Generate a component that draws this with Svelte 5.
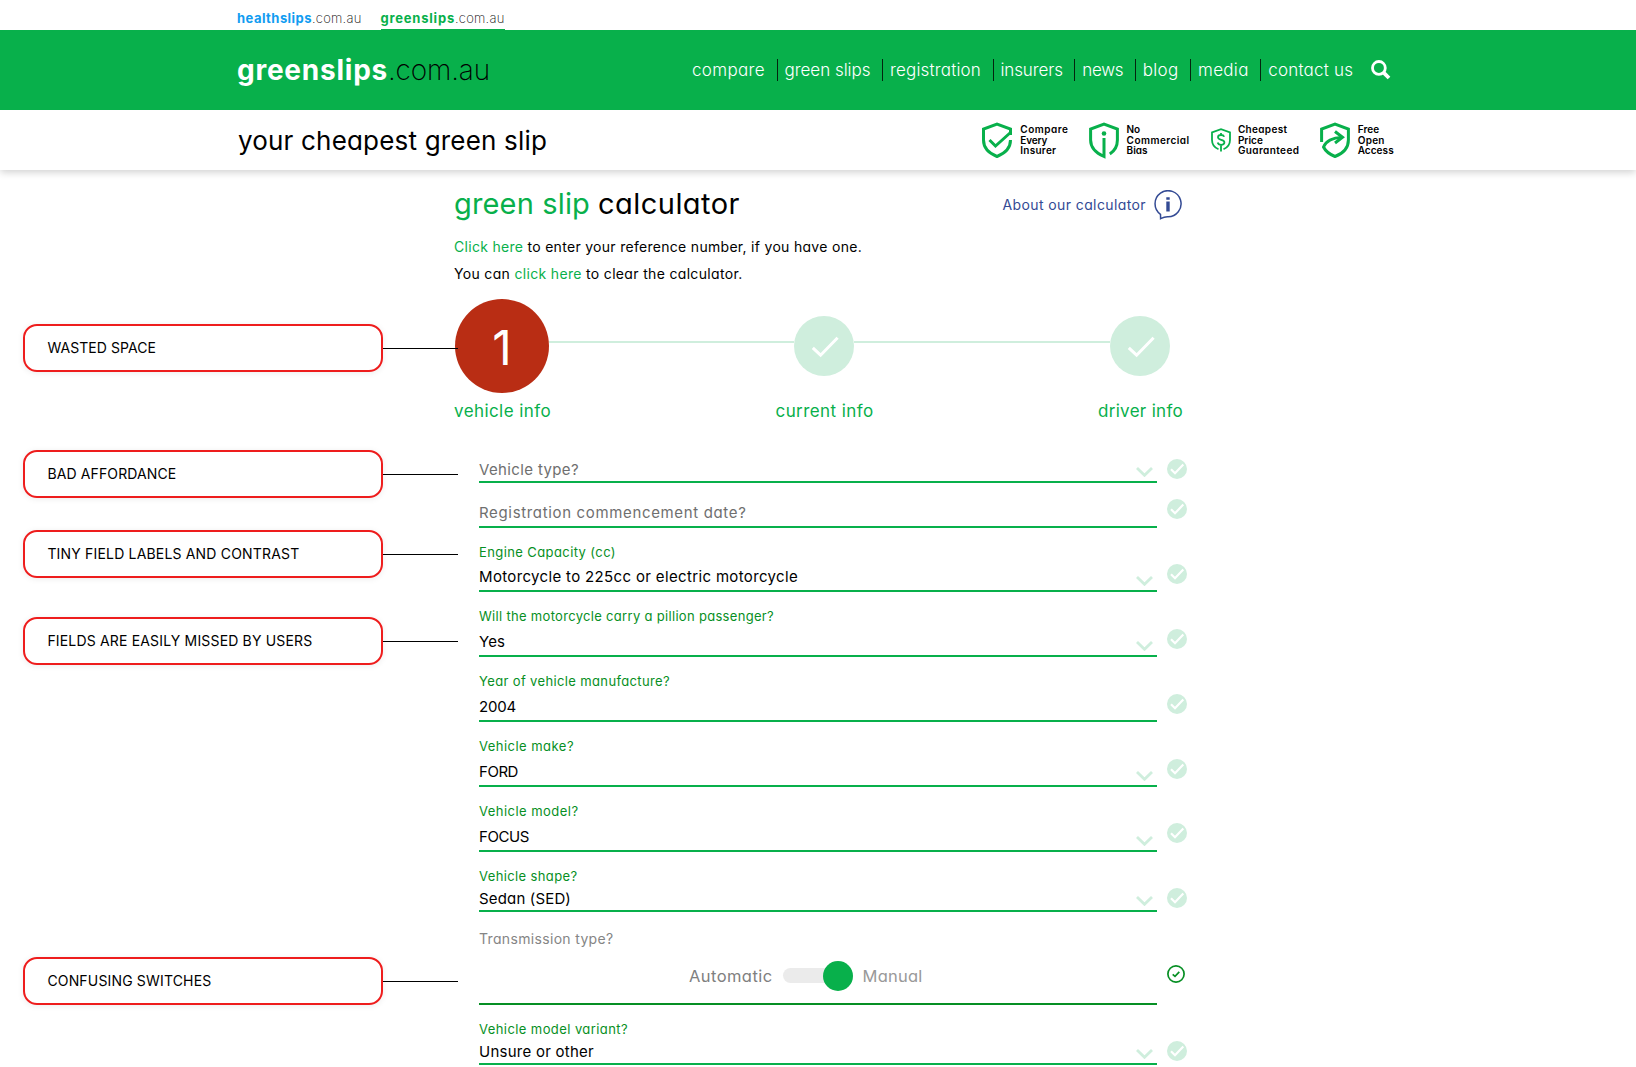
<script lang="ts">
	type Field = {
		label?: string;
		labelWidth?: number;
		value?: string;
		placeholder?: string;
		width: number;
		height: number;
		compact?: boolean;
		select?: boolean;
	};

	const nav = [
		{ text: 'compare', width: 73 },
		{ text: 'green slips', width: 86 },
		{ text: 'registration', width: 91 },
		{ text: 'insurers', width: 62.3 },
		{ text: 'news', width: 41 },
		{ text: 'blog', width: 35.7 },
		{ text: 'media', width: 50.7 },
		{ text: 'contact us', width: 85 }
	];

	const notes = [
		{ text: 'WASTED SPACE', width: 108.5, gap: 0 },
		{ text: 'BAD AFFORDANCE', width: 129, gap: 78 },
		{ text: 'TINY FIELD LABELS AND CONTRAST', width: 252, gap: 32 },
		{ text: 'FIELDS ARE EASILY MISSED BY USERS', width: 265, gap: 39 },
		{ text: 'CONFUSING SWITCHES', width: 164, gap: 292 }
	];

	const fields: Field[] = [
		{ placeholder: 'Vehicle type?', width: 100, height: 45, compact: true, select: true },
		{ placeholder: 'Registration commencement date?', width: 267.5, height: 44.6 },
		{ label: 'Engine Capacity (cc)', labelWidth: 137, value: 'Motorcycle to 225cc or electric motorcycle', width: 319, height: 64.9, select: true },
		{ label: 'Will the motorcycle carry a pillion passenger?', labelWidth: 295, value: 'Yes', width: 26, height: 64.9, select: true },
		{ label: 'Year of vehicle manufacture?', labelWidth: 191, value: '2004', width: 37, height: 64.9 },
		{ label: 'Vehicle make?', labelWidth: 95, value: 'FORD', width: 39, height: 64.9, select: true },
		{ label: 'Vehicle model?', labelWidth: 99.5, value: 'FOCUS', width: 50, height: 64.8, select: true },
		{ label: 'Vehicle shape?', labelWidth: 98.5, value: 'Sedan (SED)', width: 92, height: 60, compact: true, select: true }
	];

	const variant: Field = {
		label: 'Vehicle model variant?',
		labelWidth: 149,
		value: 'Unsure or other',
		width: 115,
		height: 60,
		compact: true,
		select: true
	};

	// Tracks a run of text out to a set width
	function fit(node: HTMLElement, width: number) {
		const count = (node.textContent ?? '').length;
		const natural = node.getBoundingClientRect().width;
		node.style.letterSpacing = `${(width - natural) / count}px`;
	}
</script>

{#snippet tick()}
	<svg class="tick" width="20" height="20" viewBox="0 0 20 20">
		<circle cx="10" cy="10" r="10" fill="#cfeedd" />
		<path d="M4 10.3 8 14.3 16.3 5.6" fill="none" stroke="#fff" stroke-width="2.2" />
	</svg>
{/snippet}

{#snippet bigTick()}
	<svg class="big-tick" width="60" height="60" viewBox="0 0 60 60">
		<circle cx="30" cy="30" r="30" fill="#cfeedd" />
		<path d="M18.8 31.8 26.6 39.2 43.6 21.800" fill="none" stroke="#fff" stroke-width="3" />
	</svg>
{/snippet}

{#snippet fieldRow(field: Field)}
	<div class="row" class:compact={field.compact} style:height="{field.height}px">
		<div class="field">
			{#if field.label}
				<span class="label"><span use:fit={field.labelWidth ?? 0}>{field.label}</span></span>
			{/if}
			<span class="value" class:placeholder={field.placeholder}>
				<span use:fit={field.width}>{field.value ?? field.placeholder}</span>
			</span>
			{#if field.select}
				<svg class="chevron" width="17" height="10" viewBox="0 0 17 10">
					<path d="M1 1 8.500 8.300 16 1" fill="none" stroke="#cfeedd" stroke-width="2.800" />
				</svg>
			{/if}
		</div>
		{@render tick()}
	</div>
{/snippet}

<div class="page">
	<div class="topbar">
		<a class="site" href="#health"><b class="blue" use:fit={75}>healthslips</b><i use:fit={49.5}>.com.au</i></a>
		<a class="site active" href="#green"><b use:fit={74.5}>greenslips</b><i use:fit={49.5}>.com.au</i></a>
	</div>

	<header>
		<div class="logo"><b use:fit={151}>greenslips</b><i use:fit={102}>.com.au</i></div>
		<nav>
			{#each nav as item}
				<a href="#nav"><span use:fit={item.width}>{item.text}</span></a>
			{/each}
		</nav>
		<svg class="search" width="20" height="20" viewBox="0 0 20 20">
			<circle cx="7.9" cy="7.9" r="6.4" fill="none" stroke="#fff" stroke-width="2.8" />
			<path d="M12.4 12.4 18 18" stroke="#fff" stroke-width="3.8" />
		</svg>
	</header>

	<div class="subheader">
		<h2><span use:fit={309}>your cheapest green slip</span></h2>
		<div class="badge">
			<svg width="32" height="37" viewBox="0 0 32 37" fill="none" stroke="#08b04b" stroke-width="3">
				<path d="M29.5 13V7L16 2.2 2.5 7v11c0 8 6 13.5 13.5 16.5C23.5 31.5 29.5 26 29.5 18" />
				<path d="M8.5 18 14.5 24 29.5 10.5" />
			</svg>
			<p><span use:fit={48}>Compare</span><br /><span use:fit={27}>Every</span><br /><span use:fit={36}>Insurer</span></p>
		</div>
		<div class="badge">
			<svg width="30" height="37" viewBox="0 0 30 37" fill="none" stroke="#08b04b" stroke-width="3">
				<path d="M15 16v18.5C7 31 1.6 26 1.6 18V7L15 2.2 28.4 7v11c0 6-3 11-7.6 14" />
				<circle cx="15" cy="11.5" r="2.3" fill="#08b04b" stroke="none" />
			</svg>
			<p><span use:fit={13.5}>No</span><br /><span use:fit={63}>Commercial</span><br /><span use:fit={21}>Bias</span></p>
		</div>
		<div class="badge">
			<svg width="20" height="24" viewBox="0 0 20 24" fill="none" stroke="#08b04b" stroke-width="1.8">
				<path d="M7.5 21.3C3.5 19.5 1 16.5 1 12V4.5L10 1.2 19 4.5V12c0 4.5-2.5 7.5-6.5 9.3" />
				<path d="M13.2 8.8c-.5-1.3-1.7-1.8-3.2-1.8-1.7 0-3 .8-3 2.3 0 3.3 6.4 1.7 6.4 5 0 1.6-1.5 2.5-3.3 2.5-1.7 0-3-.7-3.4-2.2M10 5v2M10 17v6.5" />
			</svg>
			<p><span use:fit={49.5}>Cheapest</span><br /><span use:fit={25}>Price</span><br /><span use:fit={61.5}>Guaranteed</span></p>
		</div>
		<div class="badge">
			<svg width="30" height="37" viewBox="0 0 30 37" fill="none" stroke="#08b04b" stroke-width="3">
				<path d="M1.6 20V7L15 2.2 28.4 7v11c0 8-5.5 13.5-13.4 16.5C9.5 32.3 5.500 29 3.500 25c2.500-5.500 9-9.500 18-9.500" />
				<path d="M15 9.500 22.500 15.300 15 21" />
			</svg>
			<p><span use:fit={21.5}>Free</span><br /><span use:fit={27}>Open</span><br /><span use:fit={36}>Access</span></p>
		</div>
	</div>

	<div class="content">
		<aside>
			{#each notes as note}
				<div class="note" style:margin-top="{note.gap}px">
					<div class="note-box"><span use:fit={note.width}>{note.text}</span></div>
					<div class="note-line"></div>
				</div>
			{/each}
		</aside>

		<main>
			<div class="title">
				<h1><span class="green" use:fit={136}>green slip</span><span use:fit={142}>calculator</span></h1>
				<a class="about" href="#about">
					<span use:fit={143.5}>About our calculator</span>
					<svg width="28" height="30" viewBox="0 0 28 30" fill="none" stroke="#334a94" stroke-width="1.5">
						<path d="M6.5 24.3A13 13 0 1 1 13.5 26.7C11 26.8 9 27.5 6.6 28.7Z" />
						<path d="M14 7.2v2.6M14 11.5v10" stroke-width="3.4" />
					</svg>
				</a>
			</div>

			<p class="intro"><span use:fit={408}><a href="#reference">Click here</a> to enter your reference number, if you have one.</span></p>
			<p class="intro"><span use:fit={288.5}>You can <a href="#clear">click here</a> to clear the calculator.</span></p>

			<div class="steps">
				<div class="step-one">1</div>
				<div class="bar first"></div>
				{@render bigTick()}
				<div class="bar"></div>
				{@render bigTick()}
			</div>
			<div class="step-labels">
				<span use:fit={97}>vehicle info</span>
				<span use:fit={98}>current info</span>
				<span use:fit={85}>driver info</span>
			</div>

			<form>
				{#each fields as field}
					{@render fieldRow(field)}
				{/each}
				<div class="row switch-row">
					<div class="field">
						<span class="label"><span use:fit={134.5}>Transmission type?</span></span>
						<div class="switch">
							<span use:fit={83.5}>Automatic</span>
							<div class="track"><div class="knob"></div></div>
							<span class="off" use:fit={60}>Manual</span>
						</div>
					</div>
					<svg class="tick" width="18" height="18" viewBox="0 0 18 18" fill="none" stroke="#078f24">
						<circle cx="9" cy="9" r="8.1" stroke-width="1.7" />
						<path d="M5.7 9.3 8 11.4 12.3 6.8" stroke-width="1.7" />
					</svg>
				</div>
				{@render fieldRow(variant)}
			</form>
		</main>
	</div>
</div>

<style>
	:global(body) {
		background: #fff;
		overflow: hidden;
	}

	.page {
		height: 1067px;
		overflow: hidden;
		font-family: Inter, 'Open Sans', sans-serif;
		font-feature-settings: 'cv11';
		color: #000;
		white-space: nowrap;
	}

	h1,
	h2,
	p {
		margin: 0;
		font-weight: 400;
	}

	a {
		color: inherit;
		text-decoration: none;
	}

	i {
		font-style: normal;
		font-weight: 200;
	}

	svg {
		flex-shrink: 0;
	}

	.green,
	.intro a {
		color: #08b04b;
	}

	.topbar {
		display: flex;
		gap: 19px;
		height: 30px;
		padding-left: 237px;
		box-sizing: border-box;
		font-size: 13px;
		line-height: 36px;
	}

	.site {
		height: 29px;
		border-bottom: 1px solid transparent;
		font-feature-settings: normal;
	}

	.site.active {
		border-color: #08b04b;
	}

	.site b {
		color: #08b04b;
	}

	.site b.blue {
		color: #109cf1;
	}

	header {
		display: flex;
		align-items: center;
		height: 80px;
		padding-left: 237px;
		background: #08b04b;
	}

	.logo {
		width: 455px;
		font-size: 28px;
		line-height: 76px;
		font-feature-settings: normal;
	}

	.logo b {
		color: #fff;
	}

	nav {
		display: flex;
		font-size: 17px;
		font-weight: 300;
		line-height: 22px;
		color: #fff;
	}

	nav a {
		padding: 0 11.5px 0 7px;
		border-right: 1px solid #04240f;
	}

	nav a:first-child {
		padding-left: 0;
	}

	nav a:last-child {
		border: 0;
	}

	.search {
		margin-left: 6px;
	}

	.subheader {
		position: relative;
		display: flex;
		align-items: center;
		height: 60px;
		padding-left: 238px;
		box-shadow: 0 2px 8px rgba(0, 0, 0, 0.2);
		clip-path: inset(0 0 -12px 0);
	}

	h2 {
		width: 743px;
		font-size: 26px;
		line-height: 61px;
	}

	.badge {
		display: flex;
		align-items: center;
		gap: 7.3px;
		margin-right: 21px;
	}

	.badge p {
		font-size: 10px;
		font-weight: 600;
		line-height: 10.5px;
	}

	.content {
		display: flex;
		align-items: flex-start;
	}

	aside {
		position: relative;
		z-index: 1;
		flex-shrink: 0;
		width: 458px;
		margin-right: -4px;
		padding: 154px 0 0 23px;
		box-sizing: border-box;
	}

	.note {
		display: flex;
		align-items: center;
	}

	.note-box {
		width: 360px;
		height: 48px;
		padding-left: 22.4px;
		box-sizing: border-box;
		border: 2px solid #ee1d1d;
		border-radius: 14px;
		box-shadow: 0 1px 6px rgba(0, 0, 0, 0.08);
		font-size: 14px;
		line-height: 44px;
		font-feature-settings: normal;
	}

	.note-line {
		flex: 1;
		height: 1px;
		background: #000;
	}

	main {
		width: 734px;
	}

	.title {
		display: flex;
		justify-content: space-between;
		width: 728px;
		padding-top: 12px;
	}

	h1 {
		display: flex;
		gap: 8px;
		font-size: 29px;
		line-height: 44px;
	}

	.about {
		display: flex;
		align-items: center;
		gap: 8px;
		height: 45px;
		font-size: 14px;
		color: #334a94;
	}

	.intro {
		font-size: 14px;
		line-height: 27px;
	}

	.title + .intro {
		margin-top: 6px;
	}

	.steps {
		display: flex;
		align-items: center;
		width: 715px;
		padding: 12px 0 0 1px;
	}

	.step-one {
		width: 94px;
		height: 94px;
		border-radius: 50%;
		background: #b92d14;
		color: #fff;
		font-size: 48px;
		line-height: 97px;
		text-align: center;
	}

	.bar {
		flex: 1;
		height: 2px;
		margin-bottom: 8px;
		background: #cfeedd;
	}

	.bar.first {
		flex: 0 0 245px;
	}

	.step-labels {
		display: flex;
		justify-content: space-between;
		width: 729px;
		height: 26px;
		margin-top: 5px;
		font-size: 17px;
		line-height: 27px;
		color: #08b04b;
	}

	form {
		padding: 14px 0 0 25px;
	}

	.row {
		display: flex;
		align-items: flex-end;
		gap: 10px;
	}

	.field {
		position: relative;
		display: flex;
		flex-direction: column;
		width: 678px;
		height: 100%;
		box-sizing: border-box;
		padding: 14px 0 3px;
		border-bottom: 2px solid #08b04b;
		font-size: 15px;
		line-height: 20px;
	}

	.compact .field {
		padding-bottom: 1px;
	}

	.label {
		font-size: 13px;
		color: #078f24;
	}

	.value {
		margin-top: auto;
	}

	.placeholder {
		color: #6f6f6f;
	}

	.chevron {
		position: absolute;
		right: 4px;
		bottom: 4px;
	}

	.tick {
		margin-bottom: 8.500px;
	}

	.compact .tick {
		margin-bottom: 3.600px;
	}

	.switch-row {
		height: 93px;
	}

	.switch-row .field {
		padding-top: 17px;
		border-color: #078f24;
	}

	.switch-row .label {
		font-size: 14px;
		color: #858585;
	}

	.switch-row .tick {
		margin-bottom: 22px;
	}

	.switch {
		display: flex;
		align-items: center;
		gap: 10px;
		margin: 17px 0 0 210px;
		font-size: 16.5px;
		color: #808080;
	}

	.off {
		color: #999;
	}

	.track {
		display: flex;
		align-items: center;
		justify-content: flex-end;
		width: 70px;
		height: 15px;
		border-radius: 8px;
		background: #ebebeb;
	}

	.knob {
		flex-shrink: 0;
		width: 30px;
		height: 30px;
		border-radius: 50%;
		background: #08b04b;
	}
</style>
